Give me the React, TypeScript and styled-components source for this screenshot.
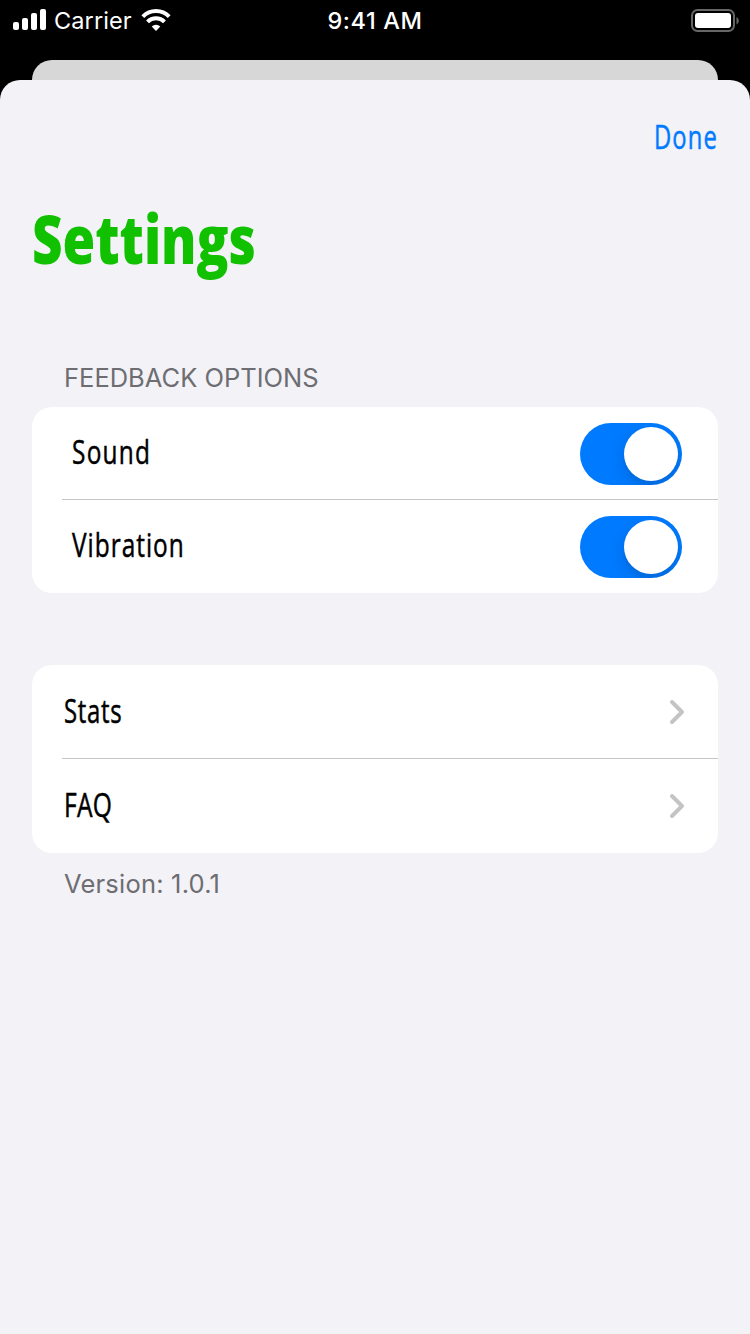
import React from "react";
import styled, { createGlobalStyle } from "styled-components";

const GlobalStyle = createGlobalStyle`
  body { margin: 0; background: #000; }
  * { box-sizing: border-box; }
`;

const Screen = styled.div`
  display: flex;
  flex-direction: column;
  width: 750px;
  height: 1334px;
  overflow: hidden;
  background: #000;
  font-family: Inter, "Liberation Sans", sans-serif;
`;

const StatusBar = styled.header`
  display: grid;
  grid-template-columns: 1fr auto 1fr;
  flex: none;
  height: 60px;
  padding: 0 11px 20px 13px;
  align-items: center;
  color: #fff;
`;

const StatusGroup = styled.div<{ $end?: boolean }>`
  display: flex;
  align-items: center;
  justify-content: ${(p) => (p.$end ? "flex-end" : "flex-start")};
`;

const Carrier = styled.span`
  width: 78px;
  margin: 2px 9px 0 7px;
  font-size: 23.5px;
  line-height: 30px;
  letter-spacing: 0.1px;
  white-space: nowrap;
`;

const Clock = styled.time`
  margin: 2px 2px 0 0;
  font-size: 23.5px;
  line-height: 30px;
  font-weight: 500;
  letter-spacing: 0.6px;
`;

const BackSheet = styled.div`
  flex: none;
  height: 20px;
  margin: 0 32px;
  border-radius: 20px 20px 0 0;
  background: #d7d7d7;
`;

const Sheet = styled.main`
  flex: 1;
  display: flex;
  flex-direction: column;
  padding: 0 32px;
  border-radius: 20px 20px 0 0;
  background: #f2f2f7;
`;

const NavBar = styled.nav`
  display: flex;
  justify-content: flex-end;
  height: 112px;
  padding: 36px 0 0;
`;

const Condensed = styled.span<{ $scale: number; $tracking?: number; $right?: boolean }>`
  display: inline-block;
  font-family: "Open Sans", "Noto Sans", sans-serif;
  font-size: 33px;
  line-height: 42px;
  font-weight: 400;
  letter-spacing: ${(p) => p.$tracking ?? 0}px;
  -webkit-text-stroke: 0.5px currentColor;
  white-space: nowrap;
  transform: scaleX(${(p) => p.$scale});
  transform-origin: ${(p) => (p.$right ? "right" : "left")} center;
`;

const RowLabel = styled(Condensed)`
  margin-bottom: 2px;
`;

const DoneButton = styled.button`
  height: 42px;
  padding: 0;
  border: 0;
  background: none;
  color: #007aff;
`;

const Title = styled.h1`
  margin: 0;
  height: 168px;
  color: #11c100;
`;

const TitleText = styled(Condensed)`
  font-size: 68px;
  line-height: 92px;
  font-weight: 800;
  -webkit-text-stroke: 0;
`;

const SectionHeader = styled.h2`
  margin: 0;
  height: 47px;
  padding: 2px 0 0 32px;
  font-size: 25.5px;
  line-height: 32px;
  font-weight: 400;
  color: #6d6d72;
`;

const Card = styled.section<{ $gap?: number }>`
  margin-bottom: ${(p) => p.$gap ?? 0}px;
  border-radius: 20px;
  background: #fff;
`;

const Row = styled.div<{ $height: number; $inset: number; $bottom?: number }>`
  display: flex;
  align-items: center;
  justify-content: space-between;
  height: ${(p) => p.$height}px;
  padding: 0 ${(p) => (p.$inset === 40 ? 36 : 32)}px ${(p) => p.$bottom ?? 0}px ${(p) => p.$inset}px;
`;

const Separator = styled.hr`
  height: 1px;
  margin: 0 0 0 30px;
  border: 0;
  background: #c5c5c7;
`;

const Toggle = styled.button`
  display: flex;
  justify-content: flex-end;
  width: 102px;
  height: 62px;
  margin-top: 2px;
  padding: 4px;
  border: 0;
  border-radius: 31px;
  overflow: hidden;
  background: #007aff;
`;

const Thumb = styled.span`
  width: 54px;
  height: 54px;
  border-radius: 50%;
  background: #fff;
  box-shadow: 0 6px 16px rgba(0, 0, 0, 0.13), 0 6px 2px rgba(0, 0, 0, 0.03);
`;

const Footer = styled.p`
  margin: 0;
  padding: 15px 0 0 32px;
  font-size: 25.5px;
  line-height: 32px;
  letter-spacing: 0.2px;
  color: #6d6d72;
`;

const Signal = () => (
  <svg width="34" height="22" viewBox="0 0 34 22" fill="#fff">
    <rect x="0" y="13" width="6" height="8" rx="2" />
    <rect x="9" y="9" width="6" height="12" rx="2" />
    <rect x="18" y="4" width="6" height="17" rx="2" />
    <rect x="27" y="0" width="6" height="21" rx="2" />
  </svg>
);

const Wifi = () => (
  <svg width="30" height="22" viewBox="0 0 30 22" fill="none" stroke="#fff" strokeWidth="4">
    <path d="M1.8 7.6a18.6 18.6 0 0 1 26.4 0" />
    <path d="M6.5 12.8a12 12 0 0 1 17 0" />
    <path d="M15 22l-4.3-4.4a6.2 6.2 0 0 1 8.6 0z" fill="#fff" stroke="none" />
  </svg>
);

const Battery = () => (
  <svg width="48" height="23" viewBox="0 0 48 23">
    <rect x="1" y="1" width="42" height="21" rx="5.5" fill="none" stroke="#666" strokeWidth="2" />
    <rect x="4" y="4" width="36" height="15" rx="3" fill="#fff" />
    <path d="M45.5 8v7.5q2.3-1.2 2.3-3.8T45.5 8z" fill="#666" />
  </svg>
);

const Chevron = () => (
  <svg width="18" height="26" viewBox="0 0 18 26" fill="none" stroke="#c4c4c6" strokeWidth="4" strokeLinecap="round" strokeLinejoin="round">
    <path d="M4 3l10 10L4 23" />
  </svg>
);

export default function App() {
  return (
    <Screen>
      <GlobalStyle />
      <StatusBar>
        <StatusGroup>
          <Signal />
          <Carrier>Carrier</Carrier>
          <Wifi />
        </StatusGroup>
        <Clock>9:41 AM</Clock>
        <StatusGroup $end>
          <Battery />
        </StatusGroup>
      </StatusBar>
      <BackSheet />
      <Sheet>
        <NavBar>
          <DoneButton>
            <Condensed $scale={0.72} $tracking={1.6} $right>Done</Condensed>
          </DoneButton>
        </NavBar>
        <Title>
          <TitleText $scale={0.778}>Settings</TitleText>
        </Title>
        <SectionHeader>FEEDBACK OPTIONS</SectionHeader>
        <Card $gap={72}>
          <Row $height={92} $inset={40}>
            <RowLabel $scale={0.74} $tracking={1.7}>Sound</RowLabel>
            <Toggle role="switch" aria-checked="true" aria-label="Sound"><Thumb /></Toggle>
          </Row>
          <Separator />
          <Row $height={93} $inset={40} $bottom={2}>
            <RowLabel $scale={0.74} $tracking={1.35}>Vibration</RowLabel>
            <Toggle role="switch" aria-checked="true" aria-label="Vibration"><Thumb /></Toggle>
          </Row>
        </Card>
        <Card>
          <Row $height={93} $inset={32}>
            <RowLabel $scale={0.725} $tracking={1}>Stats</RowLabel>
            <Chevron />
          </Row>
          <Separator />
          <Row $height={94} $inset={32}>
            <RowLabel $scale={0.745} $tracking={0.4}>FAQ</RowLabel>
            <Chevron />
          </Row>
        </Card>
        <Footer>Version: 1.0.1</Footer>
      </Sheet>
    </Screen>
  );
}
